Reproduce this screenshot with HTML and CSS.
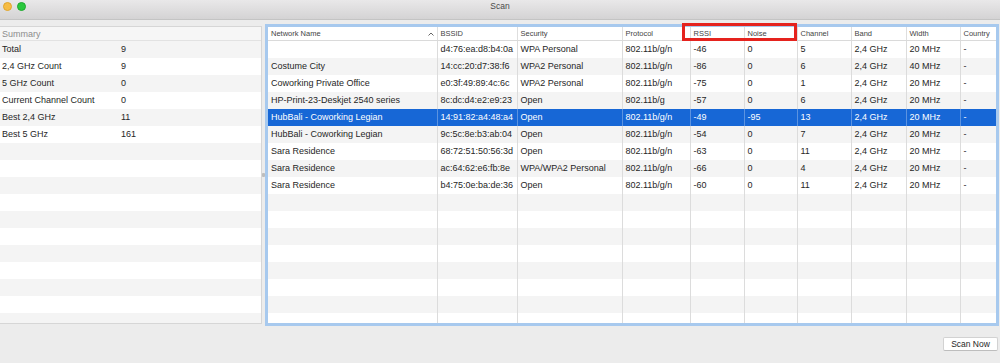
FILE: index.html
```html
<!DOCTYPE html>
<html lang="en">
<head>
    <meta charset="UTF-8">
    <title>Scan</title>
    <link rel="stylesheet" href="styles.css">
</head>
<body>
<div class="window">
    <div class="titlebar">
        <span class="light yellow"></span>
        <span class="light green"></span>
        <span class="title">Scan</span>
    </div>

    <div class="main">
        <div class="summary">
            <div class="sum-head">Summary</div>
            <div class="sum-row"><span class="key">Total</span><span>9</span></div>
            <div class="sum-row"><span class="key">2,4 GHz Count</span><span>9</span></div>
            <div class="sum-row"><span class="key">5 GHz Count</span><span>0</span></div>
            <div class="sum-row"><span class="key">Current Channel Count</span><span>0</span></div>
            <div class="sum-row"><span class="key">Best 2,4 GHz</span><span>11</span></div>
            <div class="sum-row"><span class="key">Best 5 GHz</span><span>161</span></div>
            <div class="sum-row"></div>
            <div class="sum-row"></div>
            <div class="sum-row"></div>
            <div class="sum-row"></div>
            <div class="sum-row"></div>
            <div class="sum-row"></div>
            <div class="sum-row"></div>
            <div class="sum-row"></div>
            <div class="sum-row"></div>
            <div class="sum-row"></div>
            <div class="sum-row"></div>
            <div class="sum-row"></div>
        </div>

        <div class="splitter"><span class="grip"></span></div>

        <div class="networks">
            <table>
                <colgroup>
                    <col style="width:169px">
                    <col style="width:80px">
                    <col style="width:105px">
                    <col style="width:68px">
                    <col style="width:54px">
                    <col style="width:53px">
                    <col style="width:54px">
                    <col style="width:55px">
                    <col style="width:54px">
                    <col>
                </colgroup>
                <thead>
                <tr>
                    <th class="sorted">Network Name
                        <svg class="arrow" width="6" height="4" viewBox="0 0 6 4"><path d="M0.5 3.5 L3 1 L5.5 3.5" fill="none" stroke="#666" stroke-width="1"/></svg>
                    </th>
                    <th>BSSID</th>
                    <th>Security</th>
                    <th>Protocol</th>
                    <th>RSSI</th>
                    <th>Noise</th>
                    <th>Channel</th>
                    <th>Band</th>
                    <th>Width</th>
                    <th>Country</th>
                </tr>
                </thead>
                <tbody>
                <tr><td></td><td>d4:76:ea:d8:b4:0a</td><td>WPA Personal</td><td>802.11b/g/n</td><td>-46</td><td>0</td><td>5</td><td>2,4 GHz</td><td>20 MHz</td><td>-</td></tr>
                <tr><td>Costume City</td><td>14:cc:20:d7:38:f6</td><td>WPA2 Personal</td><td>802.11b/g/n</td><td>-86</td><td>0</td><td>6</td><td>2,4 GHz</td><td>40 MHz</td><td>-</td></tr>
                <tr><td>Coworking Private Office</td><td>e0:3f:49:89:4c:6c</td><td>WPA2 Personal</td><td>802.11b/g/n</td><td>-75</td><td>0</td><td>1</td><td>2,4 GHz</td><td>20 MHz</td><td>-</td></tr>
                <tr><td>HP-Print-23-Deskjet 2540 series</td><td>8c:dc:d4:e2:e9:23</td><td>Open</td><td>802.11b/g</td><td>-57</td><td>0</td><td>6</td><td>2,4 GHz</td><td>20 MHz</td><td>-</td></tr>
                <tr class="selected"><td>HubBali - Coworking Legian</td><td>14:91:82:a4:48:a4</td><td>Open</td><td>802.11b/g/n</td><td>-49</td><td>-95</td><td>13</td><td>2,4 GHz</td><td>20 MHz</td><td>-</td></tr>
                <tr><td>HubBali - Coworking Legian</td><td>9c:5c:8e:b3:ab:04</td><td>Open</td><td>802.11b/g/n</td><td>-54</td><td>0</td><td>7</td><td>2,4 GHz</td><td>20 MHz</td><td>-</td></tr>
                <tr><td>Sara Residence</td><td>68:72:51:50:56:3d</td><td>Open</td><td>802.11b/g/n</td><td>-63</td><td>0</td><td>11</td><td>2,4 GHz</td><td>20 MHz</td><td>-</td></tr>
                <tr><td>Sara Residence</td><td>ac:64:62:e6:fb:8e</td><td>WPA/WPA2 Personal</td><td>802.11b/g/n</td><td>-66</td><td>0</td><td>4</td><td>2,4 GHz</td><td>20 MHz</td><td>-</td></tr>
                <tr><td>Sara Residence</td><td>b4:75:0e:ba:de:36</td><td>Open</td><td>802.11b/g/n</td><td>-60</td><td>0</td><td>11</td><td>2,4 GHz</td><td>20 MHz</td><td>-</td></tr>
                <tr><td></td><td></td><td></td><td></td><td></td><td></td><td></td><td></td><td></td><td></td></tr>
                <tr><td></td><td></td><td></td><td></td><td></td><td></td><td></td><td></td><td></td><td></td></tr>
                <tr><td></td><td></td><td></td><td></td><td></td><td></td><td></td><td></td><td></td><td></td></tr>
                <tr><td></td><td></td><td></td><td></td><td></td><td></td><td></td><td></td><td></td><td></td></tr>
                <tr><td></td><td></td><td></td><td></td><td></td><td></td><td></td><td></td><td></td><td></td></tr>
                <tr><td></td><td></td><td></td><td></td><td></td><td></td><td></td><td></td><td></td><td></td></tr>
                <tr><td></td><td></td><td></td><td></td><td></td><td></td><td></td><td></td><td></td><td></td></tr>
                <tr><td></td><td></td><td></td><td></td><td></td><td></td><td></td><td></td><td></td><td></td></tr>
                </tbody>
            </table>
        </div>
    </div>

    <div class="footer">
        <button class="scan-btn">Scan Now</button>
    </div>

    <!-- highlight round the RSSI / Noise headers -->
    <div class="mark"></div>
</div>
</body>
</html>
```

FILE: styles.css
```css
* {
    margin: 0;
    padding: 0;
    box-sizing: border-box;
}

body {
    background-color: #ececec;
    font-family: "Liberation Sans", Arial, sans-serif;
    font-size: 9px;
    color: #262626;
}

.window {
    position: relative;
    width: 1000px;
    height: 363px;
    overflow: hidden;
}

/* 标题栏 */
.titlebar {
    position: relative;
    height: 20px;
    background: linear-gradient(#e9e8e9, #d4d3d4);
    border-bottom: 1px solid #c4c4c4;
}

.light {
    position: absolute;
    top: 2px;
    width: 9px;
    height: 9px;
    border-radius: 50%;
}

.light.yellow {
    left: 3px;
    background-color: #f6bc44;
    border: 1px solid #e0a52c;
}

.light.green {
    left: 17px;
    background-color: #2ac83e;
    border: 1px solid #1ea92f;
}

.title {
    display: block;
    text-align: center;
    font-size: 8.5px;
    line-height: 12px;
    color: #4a4a4a;
}

.main {
    display: flex;
    height: 306px;
    padding-top: 4px;
}

/* 左侧汇总 */
.summary {
    width: 262px;
    height: 298px;
    margin-top: 2px;
    background-color: #fff;
    border: 1px solid #d6d6d6;
    border-left: none;
    overflow: hidden;
}

.sum-head {
    height: 14px;
    line-height: 14px;
    padding-left: 2px;
    color: #8c8c8c;
    background-color: #f6f6f6;
    border-bottom: 1px solid #e2e2e2;
}

.sum-row {
    display: flex;
    height: 17px;
    line-height: 17px;
    padding-left: 2px;
}

.sum-row:nth-child(even) {
    background-color: #f4f4f4;
}

.sum-row .key {
    width: 119px;
}

.splitter {
    width: 3px;
    display: flex;
    align-items: center;
    justify-content: center;
}

.grip {
    width: 3px;
    height: 4px;
    border-radius: 1px;
    background-color: #bdbdbd;
}

/* 右侧网络列表 */
.networks {
    flex: 1;
    height: 302px;
    margin-right: 1px;
    background-color: #fff;
    border: 3px solid #a7c9ee;
    overflow: hidden;
}

table {
    width: 100%;
    table-layout: fixed;
    border-collapse: collapse;
}

th {
    height: 12px;
    line-height: 12px;
    padding: 1px 3px 0;
    font-size: 7.5px;
    font-weight: normal;
    text-align: left;
    color: #444;
    white-space: nowrap;
    border-bottom: 1px solid #dadada;
    border-left: 1px solid #dedede;
}

th:first-child {
    border-left: none;
}

th.sorted {
    position: relative;
}

.arrow {
    position: absolute;
    right: 3px;
    top: 5px;
}

td {
    height: 17px;
    line-height: 17px;
    padding: 0 3px;
    white-space: nowrap;
    overflow: hidden;
    border-left: 1px solid #dcdcdc;
}

td:first-child {
    border-left: none;
}

tbody tr:nth-child(even) {
    background-color: #f4f4f4;
}

tr.selected {
    background-color: #1767d6;
    color: #fff;
}

tr.selected td {
    border-left-color: #5c93e0;
}

/* 底部按钮 */
.footer {
    display: flex;
    justify-content: flex-end;
    padding: 11px 2px 0 0;
}

.scan-btn {
    width: 55px;
    height: 14px;
    font-family: "Liberation Sans", Arial, sans-serif;
    font-size: 8.5px;
    line-height: 12px;
    color: #262626;
    background-color: #fff;
    border: 1px solid #d2d2d2;
    border-bottom-color: #bdbdbd;
    border-radius: 2px;
}

.mark {
    position: absolute;
    left: 682px;
    top: 23px;
    width: 115px;
    height: 18px;
    border: 3px solid #e5231e;
}
```
